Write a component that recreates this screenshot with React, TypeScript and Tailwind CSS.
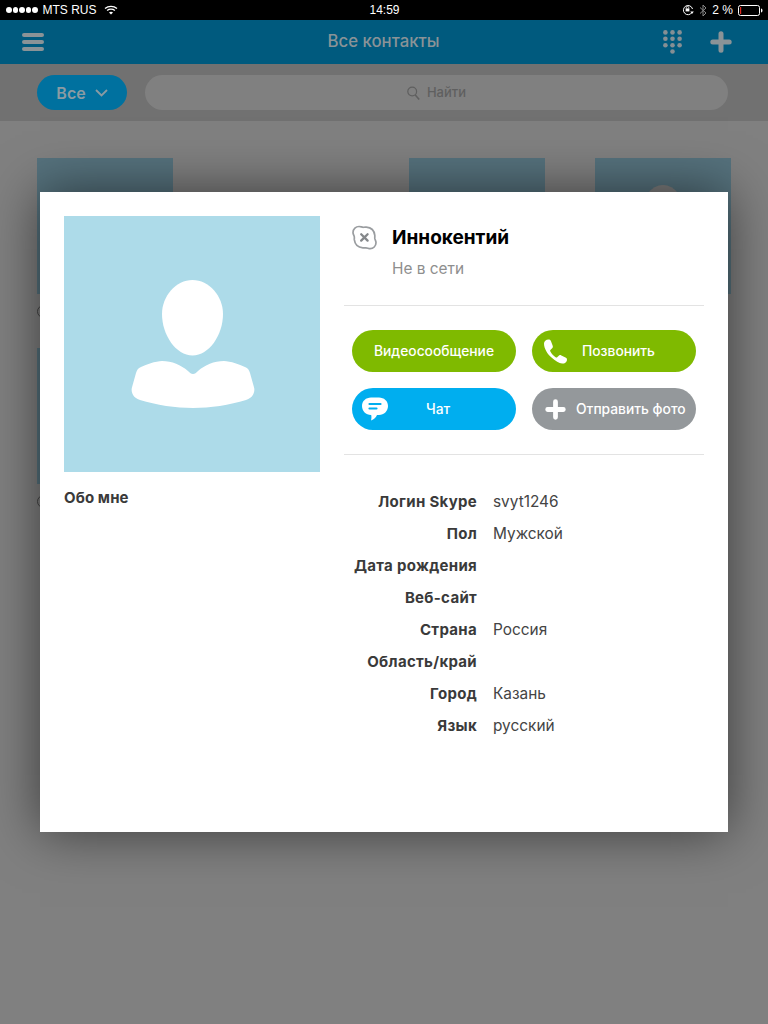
import React from "react";

const font = { fontFamily: '"Liberation Sans", Arial, sans-serif' };
const inter = { fontFamily: 'Inter, "Liberation Sans", Arial, sans-serif' };

function Wifi() {
  return (
    <svg width="14" height="10" viewBox="0 0 14 10" fill="none" stroke="#fff" strokeWidth="1.3">
      <path d="M1 3.6C4.4.6 9.6.6 13 3.6" />
      <path d="M3.1 5.6C5.3 3.8 8.7 3.8 10.9 5.6" />
      <path d="M7 9.6 5 7.4C6.2 6.5 7.8 6.5 9 7.4Z" fill="#fff" stroke="none" />
    </svg>
  );
}

function Lock() {
  return (
    <svg width="12" height="12" viewBox="0 0 12 12" fill="none">
      <path d="M9.9 8.6A4.6 4.6 0 1 1 10.5 5" stroke="#fff" strokeWidth="1" />
      <path d="M8.3 7.6 11.8 7.6 10 10Z" fill="#fff" />
      <rect x="3.6" y="4.4" width="3.8" height="3" fill="#fff" />
      <path d="M4.3 4.4V3.6a1.2 1.2 0 0 1 2.4 0v.8" stroke="#fff" strokeWidth=".8" />
    </svg>
  );
}

function Bluetooth() {
  return (
    <svg width="8" height="13" viewBox="0 0 8 13" fill="none" stroke="#8a8a8a" strokeWidth="1">
      <path d="M1 3.5 7 9 4 12V1l3 3L1 9.5" />
    </svg>
  );
}

function Battery() {
  return (
    <svg width="25" height="11" viewBox="0 0 25 11" fill="none">
      <rect x=".5" y=".5" width="21" height="10" rx="2" stroke="#fff" />
      <rect x="2" y="2" width="1.2" height="7" fill="#e0261c" />
      <path d="M23 3.5c1 .3 1.5 1 1.5 2s-.5 1.700-1.500 2Z" fill="#fff" />
    </svg>
  );
}

function Dialpad() {
  const cols = [2.4, 9.5, 16.6];
  const rows = [2.4, 8.8, 15.2];
  return (
    <svg width="19" height="24" viewBox="0 0 19 24" fill="#858f94">
      {rows.map((y) => cols.map((x) => <circle key={`${x}-${y}`} cx={x} cy={y} r="2.3" />))}
      <circle cx="9.500" cy="21.500" r="2.3" />
    </svg>
  );
}

function Plus({ size, color }: { size: number; color: string }) {
  return (
    <svg width={size} height={size} viewBox="0 0 22 22" fill="none" stroke={color} strokeWidth="5" strokeLinecap="round">
      <path d="M11 2.800v16.400M2.800 11h16.400" />
    </svg>
  );
}

function Search() {
  return (
    <svg width="13" height="14" viewBox="0 0 13 14" fill="none" stroke="#5f5f5f" strokeWidth="1.200">
      <circle cx="5.200" cy="5.500" r="4.400" />
      <path d="m8.300 9 3.900 4.500" strokeWidth="1.600" />
    </svg>
  );
}

function Phone() {
  return (
    <svg width="26" height="25" viewBox="0 0 26 25" fill="#fff">
      <path d="M1 4.500C1 2.500 3 .5 5.500.5c1.500 0 2 .6 2.500 1.800l1.700 4.500c.4 1.200.1 2-.8 2.800l-1.300 1.100c-.6.500-.6 1 -.2 1.800 1.300 2.500 3 4.400 5.200 5.700.8.500 1.300.4 1.800-.2l1.100-1.100c.8-.9 1.700-1.100 2.800-.5l4.200 2.200c1.200.6 1.700 1.400 1.400 2.800-.5 2-2.500 3.300-4.800 3.100-3-.3-6.800-2.400-10-5.500C4.500 15.500 1 9.500 1 4.500Z" />
    </svg>
  );
}

function Chat() {
  return (
    <svg width="26" height="24" viewBox="0 0 26 24" fill="none">
      <path d="M9 .5h8c5 0 9 3.500 9 8.500s-4 9-9 9h-2c-1 2.500-3 4.500-6 5.500.5-1.700.6-3.700.2-5.500H9c-5 0-9-4-9-9S4 .5 9 .5Z" fill="#fff" />
      <path d="M7.500 7h11M7.500 11.500h7" stroke="#00aeef" strokeWidth="2.200" strokeLinecap="round" />
    </svg>
  );
}

function OfflineIcon() {
  return (
    <svg width="25" height="25" viewBox="0 0 25 25" fill="none">
      <path
        d="M7 1.500c1.700 0 2.800.8 4.300.8 1-.1 1.800-.2 3-.1 4.800.4 8 3.600 8.500 8.200.1 1.100-.1 2 0 3 .2 1.500 1.200 2.400 1.200 4.300 0 3.500-2.800 6-5.800 6-1.700 0-2.800-.9-4.300-.9-1 0-1.800.2-3 .1-4.800-.4-8-3.600-8.600-8.200-.1-1 .2-1.900 0-2.900C2 10.300 1 9.400 1 7.500 1 4 4 1.500 7 1.500Z"
        stroke="#9a9da0"
        strokeWidth="1.700"
      />
      <path d="m9.200 9.200 6.400 6.400m0-6.400-6.400 6.400" stroke="#85888b" strokeWidth="2.300" strokeLinecap="round" />
    </svg>
  );
}

function Silhouette() {
  return (
    <svg width="124" height="128" viewBox="0 0 124 128" fill="#fff">
      <path d="M61.500 0C78 0 92 16 92 34 92 55 78 75.500 61.500 75.500 45 75.500 31 55 31 34 31 16 45 0 61.500 0Z" />
      <path d="M62 94C60 94 59 93 57 91 50 85 41 81 31 81 25 81 14 85 10 87 7 88 6 90 5 93L.8 108C0 112 2 118 9 120 25 125 45 128 62 128 79 128 99 125 115 120 122 118 124 112 123.200 108L119 93C118 90 117 88 114 87 110 85 99 81 93 81 83 81 74 85 67 91 65 93 64 94 62 94Z" />
    </svg>
  );
}

function BgCard({ avatar }: { avatar?: boolean }) {
  return (
    <div className="flex w-[136px] flex-col">
      <div className="flex h-[136px] justify-center bg-[#56727d] pt-[27px]">
        {avatar ? <div className="h-[60px] w-[44px] rounded-[50%] bg-[#7d7d7d]" /> : null}
      </div>
      <div className="mt-[11px] h-[13px] w-[13px] rounded-full border border-[#444]" />
    </div>
  );
}

function Pill({ bg, icon, label, textClass }: { bg: string; icon?: React.ReactNode; label: string; textClass: string }) {
  return (
    <div className={`relative flex h-[42px] w-[164px] items-center rounded-full ${bg}`}>
      {icon}
      <span className={`text-[13.800px] font-medium text-white ${textClass}`}>{label}</span>
    </div>
  );
}

const rows: [string, string][] = [
  ["Логин Skype", "svyt1246"],
  ["Пол", "Мужской"],
  ["Дата рождения", ""],
  ["Веб-сайт", ""],
  ["Страна", "Россия"],
  ["Область/край", ""],
  ["Город", "Казань"],
  ["Язык", "русский"],
];

export default function App() {
  return (
    <div style={font} className="relative h-[1024px] w-[768px] overflow-hidden bg-[#808080]">
      <div className="flex h-[20px] items-center justify-between bg-black pl-[6px] pr-[5px] text-[12px] text-white">
        <div className="flex w-[200px] items-center gap-[5px]">
          <div className="flex gap-[1px]">
            {[0, 1, 2, 3, 4].map((i) => (
              <span key={i} className="h-[5.500px] w-[5.500px] rounded-full bg-white" />
            ))}
          </div>
          <span className="mr-[2px]">MTS RUS</span>
          <Wifi />
        </div>
        <span className="text-[12px]">14:59</span>
        <div className="flex w-[200px] items-center justify-end gap-[5px]">
          <Lock />
          <Bluetooth />
          <span className="text-[12px]">2 %</span>
          <Battery />
        </div>
      </div>

      <div className="flex h-[44px] items-center justify-between bg-[#005a7e] pl-[22px] pr-[36px]">
        <div className="flex w-[22px] flex-col gap-[3px]">
          <span className="h-[4px] rounded-full bg-[#8a9397]" />
          <span className="h-[4px] rounded-full bg-[#8a9397]" />
          <span className="h-[4px] rounded-full bg-[#8a9397]" />
        </div>
        <span style={inter} className="ml-[60px] text-[16.800px] font-medium text-[#8a9397]">Все контакты</span>
        <div className="flex items-center gap-[28px]">
          <Dialpad />
          <Plus size={22} color="#8a9397" />
        </div>
      </div>

      <div className="flex h-[57px] items-center gap-[18px] bg-[#717171] pl-[37px] pr-[40px]">
        <div className="flex h-[35px] w-[90px] items-center justify-center gap-[9px] rounded-full bg-[#00719f] text-[16px] font-semibold text-[#8a9ba3]">
          <span style={inter}>Все</span>
          <svg width="13" height="8" viewBox="0 0 13 8" fill="none" stroke="#8a9ba3" strokeWidth="1.800">
            <path d="m1 1 5.500 5.500L12 1" />
          </svg>
        </div>
        <div className="flex h-[35px] flex-1 items-center justify-center gap-[7px] rounded-full bg-[#808080] text-[13px] text-[#5f5f5f]">
          <Search />
          <span style={inter} className="font-medium">Найти</span>
        </div>
      </div>

      <div className="flex flex-col gap-[30px] pl-[37px] pt-[37px]">
        <div className="flex gap-[50px]">
          <BgCard />
          <div className="w-[136px]" />
          <BgCard />
          <BgCard avatar />
        </div>
        <div className="flex gap-[50px]">
          <BgCard />
        </div>
      </div>

      <div style={inter} className="absolute left-[40px] top-[192px] flex h-[640px] w-[688px] gap-[24px] bg-white p-[24px] shadow-[0_0_50px_rgba(0,0,0,0.55)]">
        <div className="w-[256px]">
          <div className="flex h-[256px] items-start justify-center bg-[#addbe9] pl-[2px] pt-[64px]">
            <Silhouette />
          </div>
          <p className="mt-[17px] text-[15px] font-bold leading-[18px] tracking-[0.1px] text-[#3a3a3a]">Обо мне</p>
        </div>

        <div className="w-[360px]">
          <div className="flex h-[90px] gap-[15px] border-b border-[#e3e3e3] pl-[8px] pt-[9px]">
            <OfflineIcon />
            <div className="pt-[1px]">
              <p className="text-[19px] font-bold leading-[24px] text-black">Иннокентий</p>
              <p className="mt-[10px] text-[15.400px] leading-[18px] text-[#8e8e8e]">Не в сети</p>
            </div>
          </div>

          <div className="grid h-[149px] grid-cols-[164px_164px] content-start gap-x-[16px] gap-y-[16px] border-b border-[#e3e3e3] pl-[8px] pt-[24px]">
            <Pill bg="bg-[#7fba00]" label="Видеосообщение" textClass="w-full text-center" />
            <Pill
              bg="bg-[#7fba00]"
              icon={<span className="ml-[11px] flex"><Phone /></span>}
              label="Позвонить"
              textClass="ml-[13px]"
            />
            <Pill
              bg="bg-[#00aeef]"
              icon={<span className="ml-[10px] flex"><Chat /></span>}
              label="Чат"
              textClass="ml-[38px]"
            />
            <Pill
              bg="bg-[#94989b]"
              icon={<span className="ml-[13px] flex"><Plus size={21} color="#fff" /></span>}
              label="Отправить фото"
              textClass="ml-[10px] whitespace-nowrap"
            />
          </div>

          <div className="flex flex-col pt-[31px]">
            {rows.map(([k, v]) => (
              <div key={k} className="flex h-[32px] items-center gap-[16px] text-[15.400px]">
                <span className="w-[133px] text-right text-[15px] font-bold tracking-[0.3px] text-[#3a3a3a]">{k}</span>
                <span className="text-[#444]">{v}</span>
              </div>
            ))}
          </div>
        </div>
      </div>
    </div>
  );
}
